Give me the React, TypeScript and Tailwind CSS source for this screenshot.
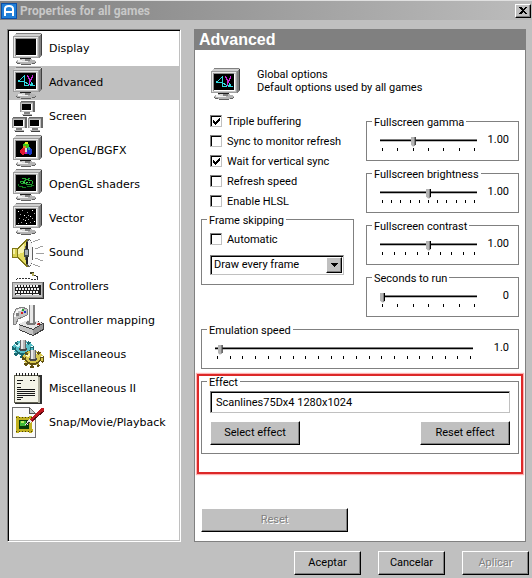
import { useId, useState } from 'react';
import type { ReactNode } from 'react';

/* ---------- icons ---------- */

function Icon({ children }: { children: ReactNode }) {
  return (
    <svg width="32" height="32" viewBox="0 0 32 32" shapeRendering="crispEdges" aria-hidden="true" className="shrink-0">
      {children}
    </svg>
  );
}

function MonitorShape() {
  return (
    <>
      <ellipse cx="14" cy="29" rx="10.5" ry="3" fill="#606060" />
      <ellipse cx="14" cy="28.5" rx="10" ry="2.5" fill="#b4b4b4" />
      <ellipse cx="11" cy="28" rx="5" ry="1.5" fill="#f0f0f0" />
      <rect x="8" y="25" width="11" height="1" fill="#202020" />
      <rect x="10" y="26" width="8" height="2" fill="#808080" />
      <rect x="10" y="26" width="3" height="2" fill="#d8d8d8" />
      <polygon points="1,3 4,0 30,0 27,3" fill="#d0d0d0" />
      <rect x="4" y="0" width="25" height="1" fill="#808080" />
      <polygon points="27,3 30,0 30,22 27,25" fill="#808080" />
      <rect x="29" y="1" width="1" height="21" fill="#404040" />
      <rect x="1" y="3" width="26" height="22" fill="#c8c8c8" />
      <path d="M1.5 25V3.5H27" stroke="#9c9c9c" fill="none" />
      <path d="M2.5 24V4.5H26" stroke="#e8e8e8" fill="none" />
      <path d="M2 24.5H26.5V4" stroke="#a0a0a0" fill="none" />
      <path d="M3.5 23V5.5H24" stroke="#909090" fill="none" />
      <path d="M4 22.5H24.5V6" stroke="#fff" fill="none" />
      <rect x="4" y="6" width="20" height="16" fill="#000" />
    </>
  );
}

function DisplayIcon() {
  return <Icon><MonitorShape /></Icon>;
}

function AdvancedIcon() {
  return (
    <Icon>
      <MonitorShape />
      <path d="M12.5 8V19M11 9.5H12M10 10.5H11M9 11.5H10M8 12.5H9M6 13.5H8M6 14.5H12M13 15.5H15M14 16.5H16M16 17.5H19M18 18.5H23M13 18.5H17M19.5 15V18M20.5 16V18" stroke="#30d8e0" fill="none" />
      <path d="M15.5 8V10M16.5 9V12M17.5 11V18M20.5 8V11M19.5 10V13M18.5 12V15" stroke="#c828d8" fill="none" />
    </Icon>
  );
}

function SmallMonitor({ x, y }: { x: number; y: number }) {
  return (
    <g transform={`translate(${x} ${y})`}>
      <rect x="1" y="0" width="14" height="11" fill="#686868" />
      <rect x="0" y="1" width="13" height="10" fill="#c0c0c0" />
      <path d="M0.5 11V1.5H13" stroke="#909090" fill="none" />
      <rect x="2" y="3" width="9" height="6" fill="#000" />
      <path d="M2 9.5H11.5V3" stroke="#fff" fill="none" />
      <rect x="4" y="11" width="6" height="2" fill="#808080" />
      <rect x="2" y="13" width="10" height="1" fill="#b0b0b0" />
      <rect x="3" y="14" width="9" height="1" fill="#404040" />
    </g>
  );
}

function ScreenIcon() {
  return (
    <Icon>
      <SmallMonitor x={8} y={0} />
      <SmallMonitor x={0} y={16} />
      <SmallMonitor x={16} y={16} />
    </Icon>
  );
}

function OpenGLIcon() {
  return (
    <Icon>
      <MonitorShape />
      <circle cx="14" cy="11" r="3" fill="#40c818" />
      <rect x="13" y="7" width="3" height="2" fill="#e8f020" />
      <polygon points="11,12 14,15 13,19 10,20 8,18 8,15" fill="#e01830" />
      <polygon points="17,12 14,14 15,19 18,20 20,18 20,15" fill="#1838c8" />
      <rect x="13" y="13" width="2" height="4" fill="#d8e0d0" />
      <rect x="11" y="11" width="3" height="2" fill="#e08020" />
      <rect x="16" y="12" width="2" height="3" fill="#20b0a0" />
      <rect x="13" y="17" width="2" height="2" fill="#c020c0" />
    </Icon>
  );
}

function ShadersIcon() {
  return (
    <Icon>
      <MonitorShape />
      <path d="M10 9.5H13V10.5H16V11.5H20M20.5 12V15M20 15.5H14V14.5H9M8.5 14V12M9 12.5H12V11.5H14M16 9.5H18" stroke="#20a830" fill="none" />
      <path d="M6.5 15V17M7 17.5H10V18.5H14M15 17.5H19V16.5H22" stroke="#108020" fill="none" />
      <path d="M11 13.5H18" stroke="#50d060" strokeDasharray="2 1" fill="none" />
    </Icon>
  );
}

const STARS = [[6, 8], [10, 7], [15, 9], [20, 7], [22, 10], [8, 11], [12, 12], [14, 14], [16, 12], [18, 13], [7, 15], [11, 16], [13, 17], [16, 16], [20, 15], [22, 18], [9, 19], [6, 20], [14, 20], [18, 19]];

function VectorIcon() {
  return (
    <Icon>
      <MonitorShape />
      {STARS.map(([x, y], i) => (
        <rect key={i} x={x} y={y} width="1" height="1" fill={i % 3 ? '#a8a8a8' : '#fff'} />
      ))}
    </Icon>
  );
}

function SoundIcon() {
  return (
    <Icon>
      <rect x="0" y="11" width="6" height="10" fill="#807818" />
      <rect x="1" y="12" width="4" height="8" fill="#d8d050" />
      <rect x="1" y="12" width="2" height="5" fill="#f4f0a0" />
      <polygon points="5,11 14,2 17,2 17,30 14,30 5,21" fill="#807818" />
      <polygon points="6,12 14,4 14,27 6,20" fill="#e4dc60" />
      <polygon points="6,12 12,6 12,15 6,17" fill="#f8f4b0" />
      <ellipse cx="17" cy="16" rx="4" ry="14" fill="#606060" />
      <ellipse cx="17.5" cy="16" rx="3" ry="13" fill="#f4f4f4" />
      <path d="M14.5 5V27" stroke="#202020" strokeWidth="2" />
      <rect x="12" y="12" width="5" height="8" fill="#404848" />
      <rect x="13" y="13" width="3" height="5" fill="#a8b0b8" />
      <path d="M21 5L28 2M23 12L31 9M24 16.5H32M23 21L31 24M21 27L28 30" stroke="#a0a0a0" fill="none" />
    </Icon>
  );
}

function KeyboardIcon() {
  return (
    <Icon>
      <path d="M4 8.5L6 7.5H18L20 8.5H25L26 6.5L24 4.5H21" stroke="#303030" strokeDasharray="2 1" fill="none" />
      <rect x="18" y="1" width="4" height="2" fill="#404020" />
      <rect x="20" y="2" width="2" height="3" fill="#b0a850" />
      <rect x="0" y="11" width="32" height="17" fill="#303030" />
      <rect x="0" y="11" width="31" height="16" fill="#808080" />
      <rect x="1" y="12" width="29" height="14" fill="#c0c0c0" />
      <rect x="3" y="14" width="26" height="10" fill="#202020" />
      {[14, 17, 20].map((y, r) => (
        <g key={y} fill="#f4f4f4">
          {[0, 1, 2, 3, 4, 5, 6, 7].map((c) => (
            <rect key={c} x={3 + c * 3 + (r % 2)} y={y} width="2" height="2" />
          ))}
        </g>
      ))}
      <g fill="#f4f4f4">
        <rect x="4" y="23" width="4" height="1" />
        <rect x="9" y="23" width="11" height="1" />
        <rect x="21" y="23" width="6" height="1" />
      </g>
    </Icon>
  );
}

function JoystickIcon() {
  return (
    <Icon>
      <path d="M1 19V10L4 4L10 2L15 4V10L11 12L6 14L4 19Z" fill="#c4c4c4" stroke="#808080" />
      <path d="M3 12L5 6L10 4" stroke="#f8f8f8" strokeWidth="2" fill="none" />
      <rect x="4" y="8" width="3" height="3" fill="#808080" />
      <rect x="10" y="4" width="2" height="2" fill="#20a030" />
      <rect x="9" y="7" width="2" height="2" fill="#d02020" />
      <rect x="12" y="6" width="2" height="2" fill="#2038c0" />
      <polygon points="7,19 18,14 32,18 32,25 21,31 7,25" fill="#404040" />
      <polygon points="7,19 18,14 31,18 21,24" fill="#e4e4e4" />
      <polygon points="7,20 21,25 21,30 7,24" fill="#c4c4c4" />
      <polygon points="21,25 31,19 31,24 21,30" fill="#989898" />
      <ellipse cx="19" cy="18" rx="5" ry="2" fill="#787878" />
      <rect x="17" y="0" width="6" height="18" fill="#808080" />
      <rect x="18" y="0" width="3" height="18" fill="#e8e8e8" />
      <rect x="25" y="18" width="3" height="2" fill="#a02020" />
      <rect x="25" y="18" width="1" height="1" fill="#ff8080" />
    </Icon>
  );
}

function Gear({ cx, cy, base, light, dark }: { cx: number; cy: number; base: string; light: string; dark: string }) {
  return (
    <g transform={`translate(${cx} ${cy})`}>
      <ellipse cx="0" cy="1" rx="9" ry="7" fill="none" stroke={dark} strokeWidth="4" strokeDasharray="3 3" />
      <ellipse cx="0" cy="0" rx="9" ry="6" fill="none" stroke={base} strokeWidth="3" strokeDasharray="3 3" />
      <ellipse cx="0" cy="1" rx="8" ry="6" fill={dark} />
      <ellipse cx="0" cy="0" rx="7" ry="5" fill={base} />
      <path d="M-6 -1L-3 -4H3" stroke={light} strokeWidth="2" fill="none" />
      <ellipse cx="0" cy="1" rx="4" ry="2" fill="#484848" />
      <rect x="-3" y="-8" width="6" height="9" fill="#686868" />
      <rect x="-2" y="-8" width="4" height="9" fill="#b8b8b8" />
      <rect x="-2" y="-8" width="2" height="9" fill="#e8e8e8" />
    </g>
  );
}

function GearsIcon() {
  return (
    <Icon>
      <Gear cx={11} cy={9} base="#58c0c8" light="#c8f4f8" dark="#186870" />
      <Gear cx={21} cy={19} base="#d8c850" light="#f8f4b0" dark="#605010" />
    </Icon>
  );
}

function NotepadIcon() {
  return (
    <Icon>
      <rect x="3" y="2" width="27" height="29" rx="1" fill="#303030" />
      <rect x="2" y="2" width="25" height="28" fill="#606050" />
      <rect x="3" y="3" width="23" height="26" fill="#f4f4e8" />
      <rect x="26" y="4" width="2" height="26" fill="#b0b0a0" />
      <path d="M4 1.5H27" stroke="#202020" strokeWidth="3" strokeDasharray="1 2" />
      <path d="M5 7.5H11M5 10.5H9M18 7.5H20M21 7.5H23M5 14.5H9M5 16.5H23M5 18.5H23M5 20.5H23M5 22.5H23M5 26.5H9M5 24.5H11" stroke="#181818" />
    </Icon>
  );
}

function SnapIcon() {
  return (
    <Icon>
      <path d="M0.5 0.5H17.5L23.5 6.5V30.5H0.5Z" fill="#fafafa" stroke="#707070" />
      <path d="M17.5 1V6.5H23" fill="#c8c8c8" stroke="#505050" />
      <rect x="4" y="10" width="16" height="15" fill="#484008" />
      <path d="M5.5 9V26M18.5 9V26M4 11.5H21M4 23.5H21" stroke="#c0b020" strokeWidth="3" />
      <path d="M4 10.5H20M4 24.5H20" stroke="#484008" strokeDasharray="1 2" />
      <rect x="7" y="13" width="10" height="9" fill="#083808" />
      <rect x="8" y="14" width="6" height="5" fill="#40b838" />
      <rect x="9" y="14" width="3" height="2" fill="#b8e860" />
      <polygon points="17,13 29,1 32,1 32,4 20,15" fill="#c01820" />
      <path d="M20 14L32 4" stroke="#580810" />
      <polygon points="13,18 17,12 20,15 15,18" fill="#e8e8e8" />
      <path d="M14 18L18 15" stroke="#303030" />
    </Icon>
  );
}

function AppLogo() {
  return (
    <svg width="16" height="16" viewBox="0 0 16 16" aria-hidden="true" className="shrink-0">
      <rect width="16" height="16" fill="#0c50a8" />
      <rect x="1" y="1" width="14" height="14" fill="#2080d8" />
      <path d="M4 13V6Q4 3 8 3Q12 3 12 6V13M4 9H12" fill="none" stroke="#fff" strokeWidth="2" />
    </svg>
  );
}

/* ---------- controls ---------- */

const RAISED = 'border border-t-white border-l-white border-r-black border-b-black bg-[#c0c0c0] shadow-[inset_-1px_-1px_0_#808080]';
const SUNKEN = 'border border-t-[#808080] border-l-[#808080] border-r-[#c0c0c0] border-b-[#c0c0c0] shadow-[inset_1px_1px_0_#000]';

function Button({ children, className, disabled }: { children: string; className: string; disabled?: boolean }) {
  return (
    <button
      type="button"
      disabled={disabled}
      className={`h-6 leading-3 disabled:text-[#808080] disabled:[text-shadow:1px_1px_0_#fff] ${RAISED} ${className}`}
    >
      {children}
    </button>
  );
}

function Check({ label, defaultChecked }: { label: string; defaultChecked?: boolean }) {
  return (
    <label className="flex h-5 items-center gap-[5px]">
      <span className="relative h-3 w-3 shrink-0">
        <input type="checkbox" defaultChecked={defaultChecked} className={`peer block h-3 w-3 appearance-none bg-white ${SUNKEN}`} />
        <svg viewBox="0 0 12 12" shapeRendering="crispEdges" className="pointer-events-none absolute inset-0 hidden h-3 w-3 peer-checked:block">
          <path d="M3 5V8L5 10L10 5V2L5 7Z" fill="#000" />
        </svg>
      </span>
      <span className="pt-0.5">{label}</span>
    </label>
  );
}

function Group({ title, children }: { title: string; children: ReactNode }) {
  return (
    <fieldset className="min-w-0 border border-[#808080]">
      <legend className="ml-[5px] px-0.5 pt-1 leading-3">{title}</legend>
      {children}
    </fieldset>
  );
}

function Slider({ title, ticks, max, value, text, wide }: {
  title: string; ticks: number; max: number; value: number; text: string; wide?: boolean;
}) {
  const id = useId();
  const [pos, setPos] = useState(value);
  return (
    <Group title={title}>
      <div className="flex pt-1 pr-[9px] pb-[9px] pl-[13px]">
        <div className="min-w-0 flex-1">
          <input
            id={id}
            type="range"
            aria-label={title}
            min={0}
            max={max}
            value={pos}
            onChange={(e) => setPos(Number(e.target.value))}
            className="block h-[14px] w-full appearance-none bg-transparent [&::-webkit-slider-runnable-track]:h-[3px] [&::-webkit-slider-runnable-track]:border-y [&::-webkit-slider-runnable-track]:border-t-[#808080] [&::-webkit-slider-runnable-track]:border-b-[#c0c0c0] [&::-webkit-slider-runnable-track]:bg-black [&::-webkit-slider-thumb]:-mt-[3px] [&::-webkit-slider-thumb]:h-[10px] [&::-webkit-slider-thumb]:w-[5px] [&::-webkit-slider-thumb]:appearance-none [&::-webkit-slider-thumb]:border-r [&::-webkit-slider-thumb]:border-black [&::-webkit-slider-thumb]:bg-[#b4b4b4] [&::-webkit-slider-thumb]:shadow-[inset_-1px_0_0_#808080] [&::-webkit-slider-thumb]:[clip-path:polygon(0_0,100%_0,100%_80%,60%_100%,40%_100%,0_80%)]"
          />
          <div className="mt-px flex justify-between px-0.5">
            {Array.from({ length: ticks }, (_, i) => (
              <span key={i} className="h-[3px] w-px bg-black" />
            ))}
          </div>
        </div>
        <output htmlFor={id} className={`text-right leading-[14px] ${wide ? 'w-9' : 'w-8'}`}>{text}</output>
      </div>
    </Group>
  );
}

/* ---------- dialog ---------- */

const PAGES = [
  { name: 'Display', icon: DisplayIcon },
  { name: 'Advanced', icon: AdvancedIcon },
  { name: 'Screen', icon: ScreenIcon },
  { name: 'OpenGL/BGFX', icon: OpenGLIcon },
  { name: 'OpenGL shaders', icon: ShadersIcon },
  { name: 'Vector', icon: VectorIcon },
  { name: 'Sound', icon: SoundIcon },
  { name: 'Controllers', icon: KeyboardIcon },
  { name: 'Controller mapping', icon: JoystickIcon },
  { name: 'Miscellaneous', icon: GearsIcon },
  { name: 'Miscellaneous II', icon: NotepadIcon },
  { name: 'Snap/Movie/Playback', icon: SnapIcon },
];

export default function App() {
  const [page, setPage] = useState('Advanced');

  return (
    <div className="min-h-screen bg-[#c0c0c0] font-['Roboto','DejaVu_Sans_Condensed',sans-serif] text-[11px] text-black">
      {/* Title bar */}
      <header className="flex h-5 items-center gap-[3px] border-t border-[#e0e0e0] bg-linear-to-r from-[#808080] to-[#bcbcbc] pr-px pl-px">
        <AppLogo />
        <h1 className="flex-1 text-[12px] font-bold text-[#c8c8c8]">Properties for all games</h1>
        <button type="button" aria-label="Close" className={`flex h-[14px] w-4 items-center justify-center ${RAISED}`}>
          <svg width="8" height="7" viewBox="0 0 8 7" shapeRendering="crispEdges">
            <path d="M0 0H2L4 2L6 0H8L5 3.5L8 7H6L4 5L2 7H0L3 3.5Z" fill="#000" />
          </svg>
        </button>
      </header>

      <div className="flex gap-[13px] pt-[9px] pr-[6px] pl-[7px]">
        {/* Page list */}
        <nav className="w-[174px] shrink-0 border border-t-[#808080] border-r-white border-b-white border-l-[#808080] bg-white pt-0.5 pl-px shadow-[inset_1px_1px_0_#000,inset_-1px_-1px_0_#c0c0c0]">
          <ul className="pr-px">
            {PAGES.map(({ name, icon: PageIcon }) => (
              <li key={name}>
                <button
                  type="button"
                  onClick={() => setPage(name)}
                  className={`flex h-[34px] w-full items-center gap-[5px] pl-[3px] font-['DejaVu_Sans',sans-serif] ${name === page ? 'bg-[#c0c0c0]' : ''}`}
                >
                  <PageIcon />
                  {name}
                </button>
              </li>
            ))}
          </ul>
        </nav>

        {/* Settings panel */}
        <main className="min-w-0 flex-1 border border-[#808080] bg-white">
          <h2 className="h-5 bg-[#808080] pl-1 font-['Liberation_Sans',sans-serif] text-[16px] leading-5 font-bold text-white">{page}</h2>

          <div className="px-[6px] pb-[9px]">
            <div className="flex h-[61px] gap-[15px] pt-[18px] pl-[9px]">
              <AdvancedIcon />
              <p className="leading-[13px]">
                Global options
                <br />
                Default options used by all games
              </p>
            </div>

            <div className="grid grid-cols-2 gap-x-3">
              <div>
                <div className="pl-[9px]">
                  <Check label="Triple buffering" defaultChecked />
                  <Check label="Sync to monitor refresh" />
                  <Check label="Wait for vertical sync" defaultChecked />
                  <Check label="Refresh speed" />
                  <Check label="Enable HLSL" />
                </div>
                <Group title="Frame skipping">
                  <div className="px-2 pt-0.5 pb-[9px]">
                    <Check label="Automatic" />
                    <div className="relative mt-[6px] w-[134px]">
                      <select aria-label="Frame skipping" className={`block h-5 w-full appearance-none bg-white pl-[3px] ${SUNKEN}`}>
                        <option>Draw every frame</option>
                      </select>
                      <span className={`pointer-events-none absolute top-0.5 right-0.5 flex h-4 w-4 items-center justify-center ${RAISED}`}>
                        <svg width="7" height="4" viewBox="0 0 7 4" shapeRendering="crispEdges">
                          <path d="M0 0H7L4 4H3Z" fill="#000" />
                        </svg>
                      </span>
                    </div>
                  </div>
                </Group>
              </div>

              <div className="flex flex-col gap-1 pt-0.5">
                <Slider title="Fullscreen gamma" ticks={7} max={6} value={2} text="1.00" />
                <Slider title="Fullscreen brightness" ticks={11} max={10} value={5} text="1.00" />
                <Slider title="Fullscreen contrast" ticks={9} max={8} value={4} text="1.00" />
                <Slider title="Seconds to run" ticks={7} max={6} value={0} text="0" />
              </div>
            </div>

            <div className="mt-1">
              <Slider title="Emulation speed" ticks={21} max={100} value={1} text="1.0" wide />
            </div>

            <div className="relative mt-1 pb-5">
              <Group title="Effect">
                <div className="px-2 pt-0.5 pb-2">
                  <input
                    type="text"
                    aria-label="Effect"
                    defaultValue="Scanlines75Dx4 1280x1024"
                    className={`block h-[22px] w-full bg-white pl-[5px] ${SUNKEN}`}
                  />
                  <div className="mt-2 flex justify-between">
                    <Button className="w-[90px]">Select effect</Button>
                    <Button className="w-[90px]">Reset effect</Button>
                  </div>
                </div>
              </Group>
              <div className="pointer-events-none absolute -inset-x-1 top-px bottom-0 border-2 border-[#dc2828] shadow-[0_0_1px_1px_#ffb0b0]" />
            </div>

            <Button className="mt-[34px] w-[147px]" disabled>Reset</Button>
          </div>
        </main>
      </div>

      <footer className="flex justify-end gap-[17px] pt-[9px] pr-[3px] pb-1">
        <Button className="w-[67px]">Aceptar</Button>
        <Button className="w-[67px]">Cancelar</Button>
        <Button className="w-[67px]" disabled>Aplicar</Button>
      </footer>
    </div>
  );
}
